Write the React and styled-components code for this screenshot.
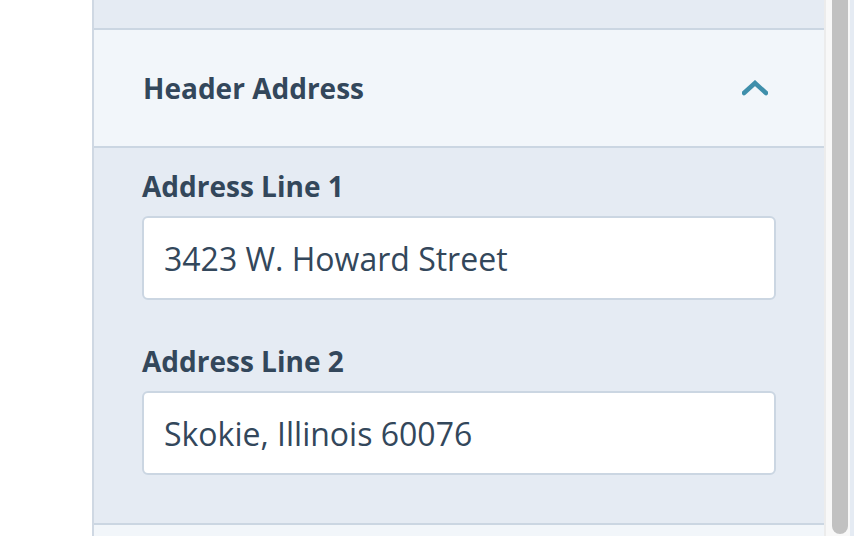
import React from "react";
import styled, { createGlobalStyle } from "styled-components";

const GlobalStyle = createGlobalStyle`
  html, body {
    margin: 0;
    padding: 0;
    background: #ffffff;
  }
  body {
    font-family: 'Open Sans', 'Noto Sans', sans-serif;
    color: #33475b;
  }
`;

const Screen = styled.div`
  display: flex;
  width: 854px;
  height: 536px;
  overflow: hidden;
  background: #ffffff;
`;

const Gutter = styled.div`
  width: 92px;
  flex-shrink: 0;
  background: #ffffff;
`;

const Panel = styled.div`
  width: 730px;
  flex-shrink: 0;
  border-left: 2px solid #cfd8e3;
  background: #e5ebf3;
  display: flex;
  flex-direction: column;
`;

const Spacer = styled.div`
  height: 28px;
  background: #e5ebf3;
`;

const Section = styled.section`
  border-top: 2px solid #cbd6e2;
  border-bottom: 2px solid #cbd6e2;
`;

const Toggle = styled.div`
  height: 116px;
  display: flex;
  align-items: center;
  justify-content: space-between;
  padding: 0 56px 0 49px;
  background: #f2f6fa;
  border-bottom: 2px solid #cbd6e2;
`;

const Title = styled.h3`
  margin: 0;
  font-size: 28px;
  line-height: 36px;
  font-weight: 700;
  color: #33475b;
`;

const Body = styled.div`
  display: flex;
  flex-direction: column;
  gap: 45px;
  padding: 22px 48px 48px 48px;
`;

const Field = styled.div`
  display: flex;
  flex-direction: column;
  gap: 14px;
`;

const Label = styled.label`
  font-size: 28px;
  line-height: 32px;
  font-weight: 700;
  color: #33475b;
`;

const Input = styled.div`
  box-sizing: border-box;
  height: 84px;
  display: flex;
  align-items: center;
  padding: 0 20px;
  background: #ffffff;
  border: 2px solid #cbd6e2;
  border-radius: 6px;
  font-size: 32px;
  color: #33475b;
`;

const Next = styled.div`
  flex: 1;
  background: #f2f6fa;
`;

const Scrollbar = styled.div`
  width: 26px;
  flex-shrink: 0;
  display: flex;
  background: #f8f8f8;
  border-left: 2px solid #ececec;
  box-sizing: border-box;
  padding: 0 2px 0 6px;
`;

const Thumb = styled.div`
  width: 16px;
  height: 534px;
  background: #c1c1c1;
  border-radius: 0 0 8px 8px;
`;

const Edge = styled.div`
  flex: 1;
  background: #e5ebf3;
`;

function Chevron() {
  return (
    <svg width="26" height="16" viewBox="0 0 26 16">
      <polyline
        points="2,13 13,3 24,13"
        fill="none"
        stroke="#3f8fab"
        strokeWidth="4.5"
        strokeLinecap="round"
        strokeLinejoin="miter"
      />
    </svg>
  );
}

export default function App() {
  return (
    <>
      <GlobalStyle />
      <Screen>
        <Gutter />
        <Panel>
          <Spacer />
          <Section>
            <Toggle>
              <Title>Header Address</Title>
              <Chevron />
            </Toggle>
            <Body>
              <Field>
                <Label>Address Line 1</Label>
                <Input>3423 W. Howard Street</Input>
              </Field>
              <Field>
                <Label>Address Line 2</Label>
                <Input>Skokie, Illinois 60076</Input>
              </Field>
            </Body>
          </Section>
          <Next />
        </Panel>
        <Scrollbar>
          <Thumb />
        </Scrollbar>
        <Edge />
      </Screen>
    </>
  );
}
